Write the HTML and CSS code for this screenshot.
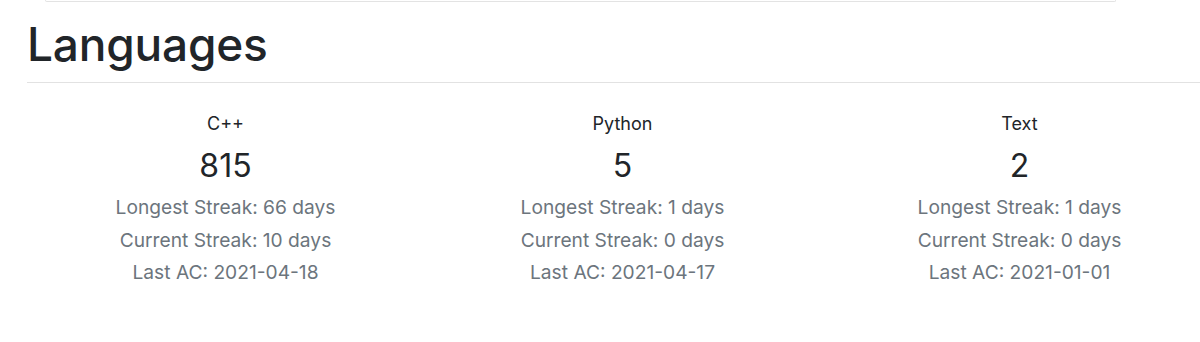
FILE: index.html
```html
<!DOCTYPE html>
<html>
<head>
<meta charset="utf-8">
<link rel="stylesheet" href="styles.css">
</head>
<body>
<div class="card-edge"></div>
<section class="languages">
  <h1 class="title">Languages</h1>
  <hr class="rule">
  <div class="lang-row">
    <div class="lang">
      <div class="lang-name">C++</div>
      <div class="lang-count">815</div>
      <div class="lang-stat">Longest Streak: 66 days</div>
      <div class="lang-stat">Current Streak: 10 days</div>
      <div class="lang-stat">Last AC: 2021-04-18</div>
    </div>
    <div class="lang">
      <div class="lang-name">Python</div>
      <div class="lang-count">5</div>
      <div class="lang-stat">Longest Streak: 1 days</div>
      <div class="lang-stat">Current Streak: 0 days</div>
      <div class="lang-stat">Last AC: 2021-04-17</div>
    </div>
    <div class="lang">
      <div class="lang-name">Text</div>
      <div class="lang-count">2</div>
      <div class="lang-stat">Longest Streak: 1 days</div>
      <div class="lang-stat">Current Streak: 0 days</div>
      <div class="lang-stat">Last AC: 2021-01-01</div>
    </div>
  </div>
</section>
</body>
</html>
```
FILE: styles.css
```css
html, body {
  margin: 0;
  padding: 0;
  background: #ffffff;
  overflow: hidden;
}
body {
  font-family: Inter, "Liberation Sans", sans-serif;
  color: #212529;
}
.card-edge {
  margin: 0 84px 0 45px;
  height: 1px;
  border: 1px solid #e3e3e3;
  border-top: none;
  border-radius: 0 0 3px 3px;
}
.languages {
  padding-left: 27px;
}
.title {
  margin: 0;
  padding-top: 14px;
  font-size: 46px;
  letter-spacing: -0.2px;
  font-weight: 500;
  line-height: 57px;
  color: #212529;
}
.rule {
  margin: 9px 0 0 0;
  border: none;
  border-top: 1px solid #e2e2e2;
  height: 0;
}
.lang-row {
  display: grid;
  grid-template-columns: repeat(3, 397px);
  padding-top: 27px;
}
.lang {
  display: flex;
  flex-direction: column;
  align-items: center;
  text-align: center;
}
.lang-name {
  font-size: 18px;
  line-height: 28px;
  color: #212529;
}
.lang-count {
  margin: 7px 0 4px;
  font-size: 32px;
  line-height: 42px;
  color: #212529;
}
.lang-stat {
  font-size: 19.2px;
  line-height: 32.5px;
  color: #6c757d;
}
```
